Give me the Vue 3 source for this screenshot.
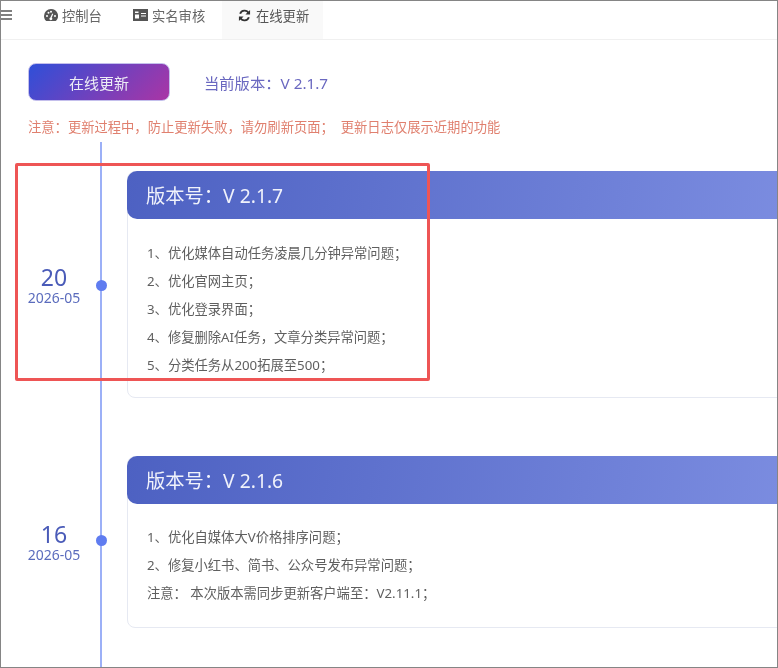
<script setup>
const tabs = [
  { label: '控制台', icon: 'gauge' },
  { label: '实名审核', icon: 'card' },
  { label: '在线更新', icon: 'sync', active: true },
]
const C = '\uFF1A'
const S = '\uFF1B'
const M = '\uFF0C'
const currentText = `当前版本${C}V 2.1.7`
const noticeText = `注意${C}更新过程中${M}防止更新失败${M}请勿刷新页面${S}  更新日志仅展示近期的功能`
const releases = [
  {
    version: 'V 2.1.7', day: '20', month: '2026-05', kind: 'long',
    lines: [`1、优化媒体自动任务凌晨几分钟异常问题${S}`, `2、优化官网主页${S}`, `3、优化登录界面${S}`, `4、修复删除AI任务${M}文章分类异常问题${S}`, `5、分类任务从200拓展至500${S}`],
  },
  {
    version: 'V 2.1.6', day: '16', month: '2026-05', kind: 'short',
    lines: [`1、优化自媒体大V价格排序问题${S}`, `2、修复小红书、简书、公众号发布异常问题${S}`, `注意${C} 本次版本需同步更新客户端至${C}V2.11.1${S}`],
  },
]
</script>

<template>
  <div class="frame">
    <header class="topbar">
      <svg class="menu" viewBox="0 0 12 10" width="12" height="10">
        <path d="M0 1h12M0 5h12M0 9h12" stroke="#555" stroke-width="1.6" fill="none" />
      </svg>
      <nav class="tabs">
        <div v-for="t in tabs" :key="t.label" class="tab" :class="{ active: t.active }">
          <svg v-if="t.icon === 'gauge'" viewBox="0 0 14 12" width="14" height="12">
            <path fill="#555" fill-rule="evenodd" d="M7 0a7 7 0 0 0-7 7c0 1.900.7 3.500 1.700 4.600.2.200.4.400.7.400h9.200c.3 0 .5-.2.700-.4A7 7 0 0 0 7 0ZM3 8a1 1 0 1 1 0-2 1 1 0 0 1 0 2Zm1.500-3.300a1 1 0 1 1 0-2 1 1 0 0 1 0 2ZM7 3.700a1 1 0 1 1 0-2 1 1 0 0 1 0 2Zm1.200 5.600a1.400 1.400 0 1 1-1.800-.9l1.800-3.900 1 .4-1.500 3.900c.3.100.4.300.5.500ZM11 8a1 1 0 1 1 0-2 1 1 0 0 1 0 2Z" />
          </svg>
          <svg v-else-if="t.icon === 'card'" viewBox="0 0 15 12" width="15" height="12">
            <path fill="#555" fill-rule="evenodd" d="M0 0h15v12H0ZM2 2.500v1.500h3.500V2.500Zm0 3v4h4v-4ZM8 4v1h5V4Zm0 2.500v1h5v-1Z" />
          </svg>
          <svg v-else viewBox="0 0 14 14" width="13" height="13">
            <path fill="none" stroke="#333" stroke-width="2" d="M11.500 4.500A5 5 0 0 0 2.300 5.200M2.500 9.500a5 5 0 0 0 9.200-.7" />
            <path fill="#333" d="M13 1v5H8ZM1 13V8h5Z" />
          </svg>
          <span>{{ t.label }}</span>
        </div>
      </nav>
    </header>

    <main class="content">
      <section class="actions">
        <button class="update-btn" type="button">在线更新</button>
        <span class="current">{{ currentText }}</span>
      </section>
      <p class="notice">{{ noticeText }}</p>

      <div class="timeline">
        <article v-for="r in releases" :key="r.version" class="row" :class="r.kind">
          <div class="date">
            <div class="day">{{ r.day }}</div>
            <div class="month">{{ r.month }}</div>
          </div>
          <div class="rail"><span class="dot"></span></div>
          <div class="card">
            <h2 class="card-head">版本号{{ C }}{{ r.version }}</h2>
            <ul class="card-body">
              <li v-for="l in r.lines" :key="l">{{ l }}</li>
            </ul>
          </div>
        </article>
      </div>
    </main>

    <div class="highlight"></div>
  </div>
</template>

<style>
html, body { margin: 0; background: #fff; }
</style>

<style scoped>
.frame {
  position: relative;
  width: 778px;
  height: 668px;
  box-sizing: border-box;
  overflow: hidden;
  border: 1px solid #858585;
  background: #fff;
  font-family: "Noto Sans", "Noto Sans CJK SC", sans-serif;
  filter: blur(0.35px);
}
.topbar {
  display: flex;
  align-items: flex-start;
  height: 38px;
  border-bottom: 1px solid #f0f0f0;
}
.menu { flex: none; margin: 9px 0 0 -1px; }
.tabs { display: flex; flex: none; margin-left: 16px; }
.tab {
  display: flex;
  flex: none;
  align-items: center;
  gap: 4px;
  padding: 0 0 10px 16px;
  height: 38px;
  box-sizing: border-box;
  font-size: 13.300px;
  color: #666;
  white-space: nowrap;
}
.tab svg { flex: none; }
.tab:nth-child(1) { width: 89px; }
.tab:nth-child(2) { width: 105px; }
.tab.active { width: 101px; background: #f9f9f9; color: #555; gap: 5px; }
.content { padding: 23px 0 0 27px; }
.actions { display: flex; align-items: center; gap: 34px; }
.update-btn {
  width: 142px;
  height: 38px;
  border: 1px solid #c4bfec;
  border-radius: 8px;
  background: linear-gradient(135deg, #2f4fd8, #aa35a5);
  color: #ececf5;
  font: inherit;
  font-size: 15px;
}
.current { font-size: 15.300px; color: #6a68c0; margin-top: -1px; }
.notice {
  margin: 17px 0 0;
  font-size: 13.300px;
  line-height: 18px;
  color: #e0806f;
  white-space: pre;
}
.timeline { margin: 6px 0 0 -27px; }
.row { display: flex; align-items: stretch; }
.row.long { height: 285px; }
.row.short { height: 240px; }
.date {
  flex: none;
  width: 99px;
  padding-left: 7px;
  box-sizing: border-box;
  align-self: center;
  text-align: center;
  color: #4a5bb8;
  white-space: nowrap;
}
.row.short .date { margin-top: -10px; }
.day { font-size: 23px; line-height: 26px; }
.month { font-size: 14px; line-height: 16px; color: #5b6cbd; }
.rail {
  position: relative;
  flex: none;
  width: 2px;
  background: #9cb0f7;
}
.dot {
  position: absolute;
  left: 50%;
  width: 11px;
  height: 11px;
  margin-left: -5.500px;
  border-radius: 50%;
  background: #5f7cf0;
}
.row.long .dot { top: 138px; }
.row.short .dot { top: 108px; }
.card {
  flex: none;
  width: 700px;
  margin-left: 25px;
  border: 1px solid #e6e9f2;
  border-radius: 8px;
  box-sizing: border-box;
}
.row.long .card { margin-top: 29px; height: 227px; }
.row.short .card { margin-top: 29px; height: 172px; }
.card-head {
  margin: -1px -1px 0;
  padding-left: 19px;
  height: 48px;
  display: flex;
  align-items: center;
  border-radius: 10px 0 0 10px;
  background: linear-gradient(100deg, #4d61c2, #7e8fe2);
  color: #f0f2fb;
  font-size: 19.300px;
  font-weight: 400;
}
.card-body {
  list-style: none;
  margin: 0;
  padding: 20px 0 0 19px;
  font-size: 13.300px;
  line-height: 28px;
  color: #5f5f5f;
}
.row.short .card-body { padding-top: 19px; }
.highlight {
  position: absolute;
  left: 14px;
  top: 162px;
  width: 415px;
  height: 218px;
  box-sizing: border-box;
  border: 3px solid #ee5555;
  border-radius: 2px;
}
</style>
